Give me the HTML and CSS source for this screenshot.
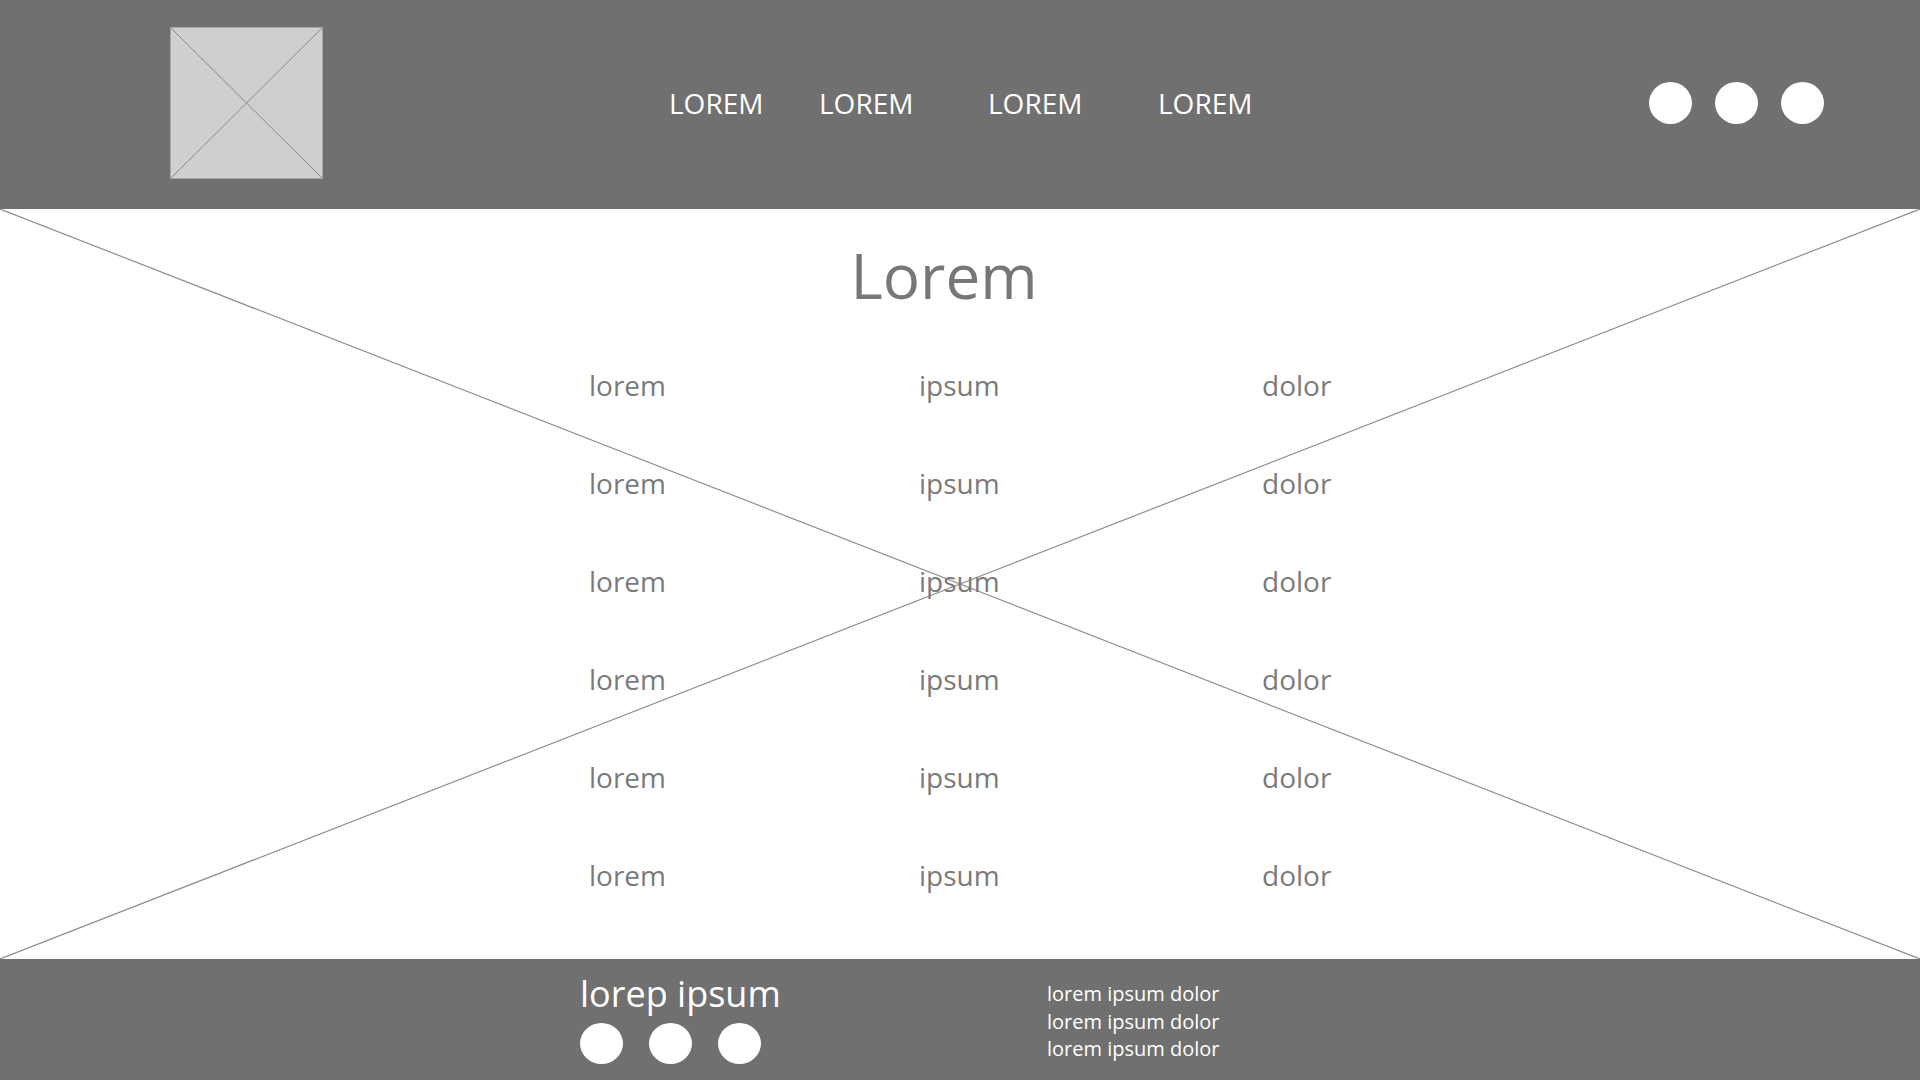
FILE: index.html
```html
<!DOCTYPE html>
<html lang="en">
<head>
<meta charset="utf-8">
<title>Wireframe</title>
<link rel="stylesheet" href="styles.css">
</head>
<body>
<header class="site-header">
  <div class="logo">
    <svg width="153" height="152" viewBox="0 0 153 152">
      <rect x="0.5" y="0.5" width="152" height="151" fill="#cfcfcf" stroke="#a8a8a8"/>
      <line x1="0.5" y1="0.5" x2="152.5" y2="151.5" stroke="#8a8a8a" stroke-width="1"/>
      <line x1="152.5" y1="0.5" x2="0.5" y2="151.5" stroke="#8a8a8a" stroke-width="1"/>
    </svg>
  </div>
  <nav class="nav">
    <a class="nav-item">LOREM</a>
    <a class="nav-item">LOREM</a>
    <a class="nav-item">LOREM</a>
    <a class="nav-item">LOREM</a>
  </nav>
  <div class="dots">
    <span class="dot"></span>
    <span class="dot"></span>
    <span class="dot"></span>
  </div>
</header>
<main class="hero">
  <svg class="cross" viewBox="0 0 1920 750" preserveAspectRatio="none">
    <line x1="0" y1="0" x2="1920" y2="750" stroke="#8e8e8e" stroke-width="1.2"/>
    <line x1="1920" y1="0" x2="0" y2="750" stroke="#8e8e8e" stroke-width="1.2"/>
  </svg>
  <h1 class="title">Lorem</h1>
  <div class="table">
    <span>lorem</span><span>ipsum</span><span>dolor</span>
    <span>lorem</span><span>ipsum</span><span>dolor</span>
    <span>lorem</span><span>ipsum</span><span>dolor</span>
    <span>lorem</span><span>ipsum</span><span>dolor</span>
    <span>lorem</span><span>ipsum</span><span>dolor</span>
    <span>lorem</span><span>ipsum</span><span>dolor</span>
  </div>
</main>
<footer class="site-footer">
  <div class="foot-left">
    <div class="foot-title">lorep ipsum</div>
    <div class="foot-dots">
      <span class="fdot"></span>
      <span class="fdot"></span>
      <span class="fdot"></span>
    </div>
  </div>
  <div class="foot-right">
    <div>lorem ipsum dolor</div>
    <div>lorem ipsum dolor</div>
    <div>lorem ipsum dolor</div>
  </div>
</footer>
</body>
</html>
```
FILE: styles.css
```css
html, body {
  margin: 0;
  padding: 0;
}
body {
  width: 1920px;
  height: 1080px;
  overflow: hidden;
  font-family: "Open Sans", "Noto Sans", sans-serif;
  background: #ffffff;
}
.site-header {
  height: 209px;
  box-sizing: border-box;
  padding: 0 96px 4px 170px;
  background: #707070;
  display: flex;
  align-items: center;
}
.logo {
  width: 153px;
  height: 152px;
  display: flex;
}
.nav {
  margin-left: 346px;
  display: grid;
  grid-template-columns: 150px 169px 170px auto;
}
.nav-item {
  color: #ffffff;
  font-size: 28px;
  line-height: 1;
}
.dots {
  margin-left: auto;
  display: flex;
  gap: 23px;
}
.dot {
  width: 43px;
  height: 42px;
  border-radius: 50%;
  background: #ffffff;
}
.hero {
  position: relative;
  height: 750px;
  box-sizing: border-box;
  padding-top: 27px;
}
.cross {
  position: absolute;
  left: 0;
  top: 0;
  width: 100%;
  height: 100%;
}
.title {
  position: relative;
  margin: 0;
  padding-right: 32px;
  text-align: center;
  font-weight: 400;
  font-size: 62px;
  line-height: 79px;
  color: #777777;
}
.table {
  position: relative;
  margin: 21px 0 0 589px;
  display: grid;
  grid-template-columns: 330px 343px auto;
  font-size: 28px;
  line-height: 98px;
  color: #7a7a7a;
}
.site-footer {
  height: 121px;
  box-sizing: border-box;
  background: #707070;
  color: #ffffff;
  display: flex;
  padding-left: 580px;
}
.foot-left {
  width: 467px;
  padding-top: 15px;
}
.foot-title {
  font-size: 36px;
  line-height: 40px;
}
.foot-dots {
  margin-top: 9px;
  display: flex;
  gap: 26px;
}
.fdot {
  width: 43px;
  height: 41px;
  border-radius: 50%;
  background: #ffffff;
}
.foot-right {
  padding-top: 21px;
  font-size: 20px;
  line-height: 27.5px;
}
```
